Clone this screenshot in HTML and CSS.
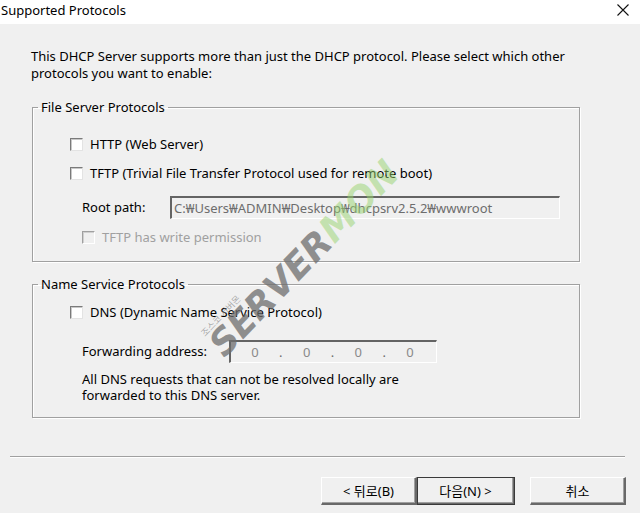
FILE: index.html
```html
<!DOCTYPE html>
<html lang="ko">
<head>
    <meta charset="UTF-8">
    <title>Supported Protocols</title>
    <link rel="stylesheet" href="styles.css">
</head>
<body>
    <div class="titlebar">
        <span class="title">Supported Protocols</span>
        <span class="close">
            <svg width="12" height="12" viewBox="0 0 12 12"><path d="M0.5 0.5 L11.5 11.5 M11.5 0.5 L0.5 11.5" stroke="#111" stroke-width="1.1"/></svg>
        </span>
    </div>

    <div class="content">
        <p class="intro">This DHCP Server supports more than just the DHCP protocol. Please select which other protocols you want to enable:</p>

        <fieldset class="group group-file">
            <legend>File Server Protocols</legend>
            <div class="row row-http">
                <span class="check"></span>
                <span>HTTP (Web Server)</span>
            </div>
            <div class="row row-tftp">
                <span class="check"></span>
                <span>TFTP (Trivial File Transfer Protocol used for remote boot)</span>
            </div>
            <div class="field row-root">
                <span class="field-label">Root path:</span>
                <div class="textbox path-box">C:₩Users₩ADMIN₩Desktop₩dhcpsrv2.5.2₩wwwroot</div>
            </div>
            <div class="row row-write disabled">
                <span class="check"></span>
                <span>TFTP has write permission</span>
            </div>
        </fieldset>

        <fieldset class="group group-name">
            <legend>Name Service Protocols</legend>
            <div class="row row-dns">
                <span class="check"></span>
                <span>DNS (Dynamic Name Service Protocol)</span>
            </div>
            <div class="field row-fwd">
                <span class="field-label fwd-label">Forwarding address:</span>
                <div class="textbox ip-box">
                    <span>0</span><span class="dot">.</span>
                    <span>0</span><span class="dot">.</span>
                    <span>0</span><span class="dot">.</span>
                    <span>0</span>
                </div>
            </div>
            <p class="note">All DNS requests that can not be resolved locally are<br>forwarded to this DNS server.</p>
        </fieldset>

        <div class="separator"></div>

        <div class="buttons">
            <button class="btn">&lt; 뒤로(B)</button>
            <button class="btn btn-default">다음(N) &gt;</button>
            <button class="btn btn-cancel">취소</button>
        </div>
    </div>

    <!-- watermark over the dialog -->
    <div class="watermark">
        <span class="wm-small">조스코 서버몬</span>
        <span class="wm-server">SERVER</span><span class="wm-mon">MON</span>
    </div>
</body>
</html>
```

FILE: styles.css
```css
html, body {
    margin: 0;
    padding: 0;
}

body {
    width: 640px;
    height: 513px;
    background-color: #f0f0f0;
    font-family: "Noto Sans", "Noto Sans CJK KR", sans-serif;
    font-size: 13px;
    color: #000;
    position: relative;
    overflow: hidden;
}

.titlebar {
    height: 24px;
    background-color: #fff;
    display: flex;
    align-items: center;
    justify-content: space-between;
    padding: 0 11px 0 1px;
}

.title {
    font-size: 13px;
    line-height: 20px;
    margin-top: -4px;
}

.close {
    display: flex;
    margin-top: -4px;
}

.content {
    padding: 24px 0 0 0;
}

.intro {
    margin: 0 0 0 31px;
    width: 560px;
    line-height: 17px;
}

.group {
    margin: 17px 0 0 32px;
    width: 546px;
    padding: 0 0 15px 0;
    border: 1px solid #a0a0a0;
    box-shadow: 1px 1px 0 #fff, inset 1px 1px 0 #fff;
    min-width: 0;
    box-sizing: content-box;
}

.group legend {
    margin-left: 5px;
    padding: 0 3px;
    line-height: 17px;
}

.group-name {
    margin-top: 14px;
    padding-bottom: 14px;
}

.row {
    display: flex;
    align-items: center;
    height: 17px;
    line-height: 17px;
    margin-left: 37px;
}

.check {
    width: 11px;
    height: 11px;
    background-color: #fff;
    border-style: solid;
    border-width: 1px;
    border-color: #7a7a7a #e3e3e3 #e3e3e3 #7a7a7a;
    box-shadow: inset 1px 1px 0 #c8c8c8;
    margin-right: 7px;
    flex: none;
}

.row-http {
    margin-top: 20px;
}

.row-tftp {
    margin-top: 12px;
}

.field {
    display: flex;
    align-items: center;
    margin-left: 49px;
}

.row-root {
    margin-top: 14px;
}

.field-label {
    width: 88px;
    line-height: 17px;
}

.textbox {
    box-sizing: border-box;
    background-color: #f0f0f0;
    border-style: solid;
    border-width: 2px 1px 1px 2px;
    border-color: #646464 #fff #fff #646464;
    color: #6d6d6d;
    display: flex;
    align-items: center;
}

.path-box {
    width: 390px;
    height: 23px;
    padding-left: 2px;
}

.row-write {
    margin-top: 10px;
    margin-left: 49px;
}

.disabled {
    color: #a0a0a0;
}

.disabled .check {
    background-color: #f0f0f0;
    border-color: #a0a0a0 #fff #fff #a0a0a0;
    box-shadow: inset 1px 1px 0 #d0d0d0;
}

.row-dns {
    margin-top: 11px;
}

.row-fwd {
    margin-top: 19px;
}

.fwd-label {
    width: 147px;
}

.ip-box {
    width: 208px;
    height: 23px;
    justify-content: space-around;
    padding: 0 12px 0 10px;
    color: #8a8a8a;
}

.ip-box .dot {
    color: #6d6d6d;
}

.note {
    margin: 8px 0 0 49px;
    line-height: 16px;
}

.separator {
    margin: 38px 0 0 10px;
    width: 615px;
    height: 1px;
    background-color: #a0a0a0;
    border-bottom: 1px solid #fff;
}

.buttons {
    display: flex;
    margin: 19px 0 0 321px;
}

.btn {
    box-sizing: border-box;
    width: 96px;
    height: 28px;
    font-family: "Noto Sans", "Noto Sans CJK KR", sans-serif;
    font-size: 13px;
    color: #000;
    background-color: #f0f0f0;
    border-style: solid;
    border-width: 1px 2px 2px 1px;
    border-color: #fff #696969 #696969 #fff;
    box-shadow: inset -1px -1px 0 #a0a0a0;
    padding: 0;
}

.btn-default {
    width: 98px;
    outline: 1px solid #3a3a3a;
    outline-offset: -1px;
    border-color: #fff #696969 #696969 #fff;
}

.btn-cancel {
    margin-left: 15px;
}

.watermark {
    position: absolute;
    left: 228px;
    top: 328px;
    transform: rotate(-46deg);
    transform-origin: left bottom;
    white-space: nowrap;
    pointer-events: none;
    font-family: "DejaVu Sans", sans-serif;
    font-weight: bold;
    font-style: italic;
    font-size: 36px;
    line-height: 34px;
}

.wm-server {
    color: rgba(110, 110, 110, 0.75);
}

.wm-mon {
    color: rgba(150, 210, 110, 0.5);
}

.wm-small {
    position: absolute;
    left: 2px;
    top: -8px;
    font-size: 9px;
    line-height: 10px;
    font-weight: normal;
    font-style: normal;
    font-family: "Noto Sans CJK KR", sans-serif;
    color: rgba(120, 120, 120, 0.6);
}
```
